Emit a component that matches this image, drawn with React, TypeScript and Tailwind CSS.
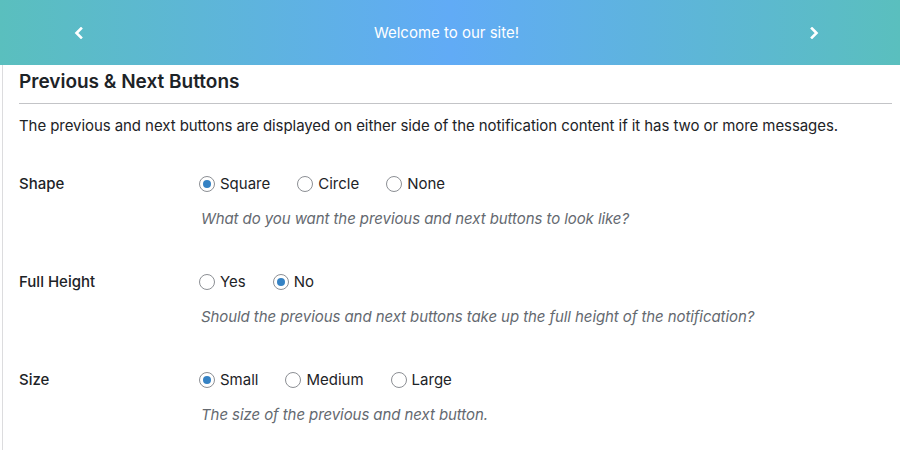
import React from 'react'

type Option = { label: string; checked?: boolean }

const rows: { label: string; options: Option[]; help: string }[] = [
  {
    label: 'Shape',
    options: [{ label: 'Square', checked: true }, { label: 'Circle' }, { label: 'None' }],
    help: 'What do you want the previous and next buttons to look like?',
  },
  {
    label: 'Full Height',
    options: [{ label: 'Yes' }, { label: 'No', checked: true }],
    help: 'Should the previous and next buttons take up the full height of the notification?',
  },
  {
    label: 'Size',
    options: [{ label: 'Small', checked: true }, { label: 'Medium' }, { label: 'Large' }],
    help: 'The size of the previous and next button.',
  },
]

function Chevron({ dir }: { dir: 'left' | 'right' }) {
  return (
    <svg width="10" height="12" viewBox="0 0 10 12" fill="none">
      <path
        d={dir === 'left' ? 'M7 1.5 L2.5 6 L7 10.5' : 'M3 1.5 L7.5 6 L3 10.5'}
        stroke="white"
        strokeWidth="2.6"
        strokeLinecap="square"
      />
    </svg>
  )
}

function Radio({ option }: { option: Option }) {
  return (
    <label className="flex items-center gap-[5px] mr-[27px]">
      <span className="w-4 h-4 rounded-full border border-[#8c8f94] bg-white flex items-center justify-center">
        {option.checked && <span className="w-2 h-2 rounded-full bg-[#3582c4]" />}
      </span>
      <span>{option.label}</span>
    </label>
  )
}

export default function App() {
  return (
    <div className="w-[900px] h-[450px] overflow-hidden bg-white font-['Inter','Liberation_Sans',sans-serif] text-[#1d2327]">
      <div className="h-[65px] flex items-center text-white bg-[linear-gradient(to_right,#5abfbe_0%,#61abf6_50%,#5abfbe_100%)]">
        <div className="w-16 ml-[47px] flex justify-center">
          <Chevron dir="left" />
        </div>
        <div className="flex-1 text-center text-[15px] leading-none">Welcome to our site!</div>
        <div className="w-16 mr-[54px] flex justify-center">
          <Chevron dir="right" />
        </div>
      </div>
      <div className="ml-[2px] border-l border-[#dcdcde] h-[385px] pl-4 pr-[8px]">
        <h2 className="text-[19px] font-semibold pt-[5px] pb-[10px] leading-[23px]">Previous &amp; Next Buttons</h2>
        <div className="border-t border-[#c3c4c7]" />
        <p className="text-[15px] mt-[12px] leading-[20px] tracking-[-0.07px]">
          The previous and next buttons are displayed on either side of the notification content if it has two or more messages.
        </p>
        <div className="mt-[38px] flex flex-col gap-[43px]">
          {rows.map((row) => (
            <div key={row.label} className="flex text-[15px]">
              <div className="w-[180px] font-medium leading-[20px]">{row.label}</div>
              <div>
                <div className="flex leading-[20px]">
                  {row.options.map((o) => (
                    <Radio key={o.label} option={o} />
                  ))}
                </div>
                <p className="mt-[15px] ml-[2px] italic text-[#646970] leading-[20px] tracking-[-0.08px]">{row.help}</p>
              </div>
            </div>
          ))}
        </div>
      </div>
    </div>
  )
}
